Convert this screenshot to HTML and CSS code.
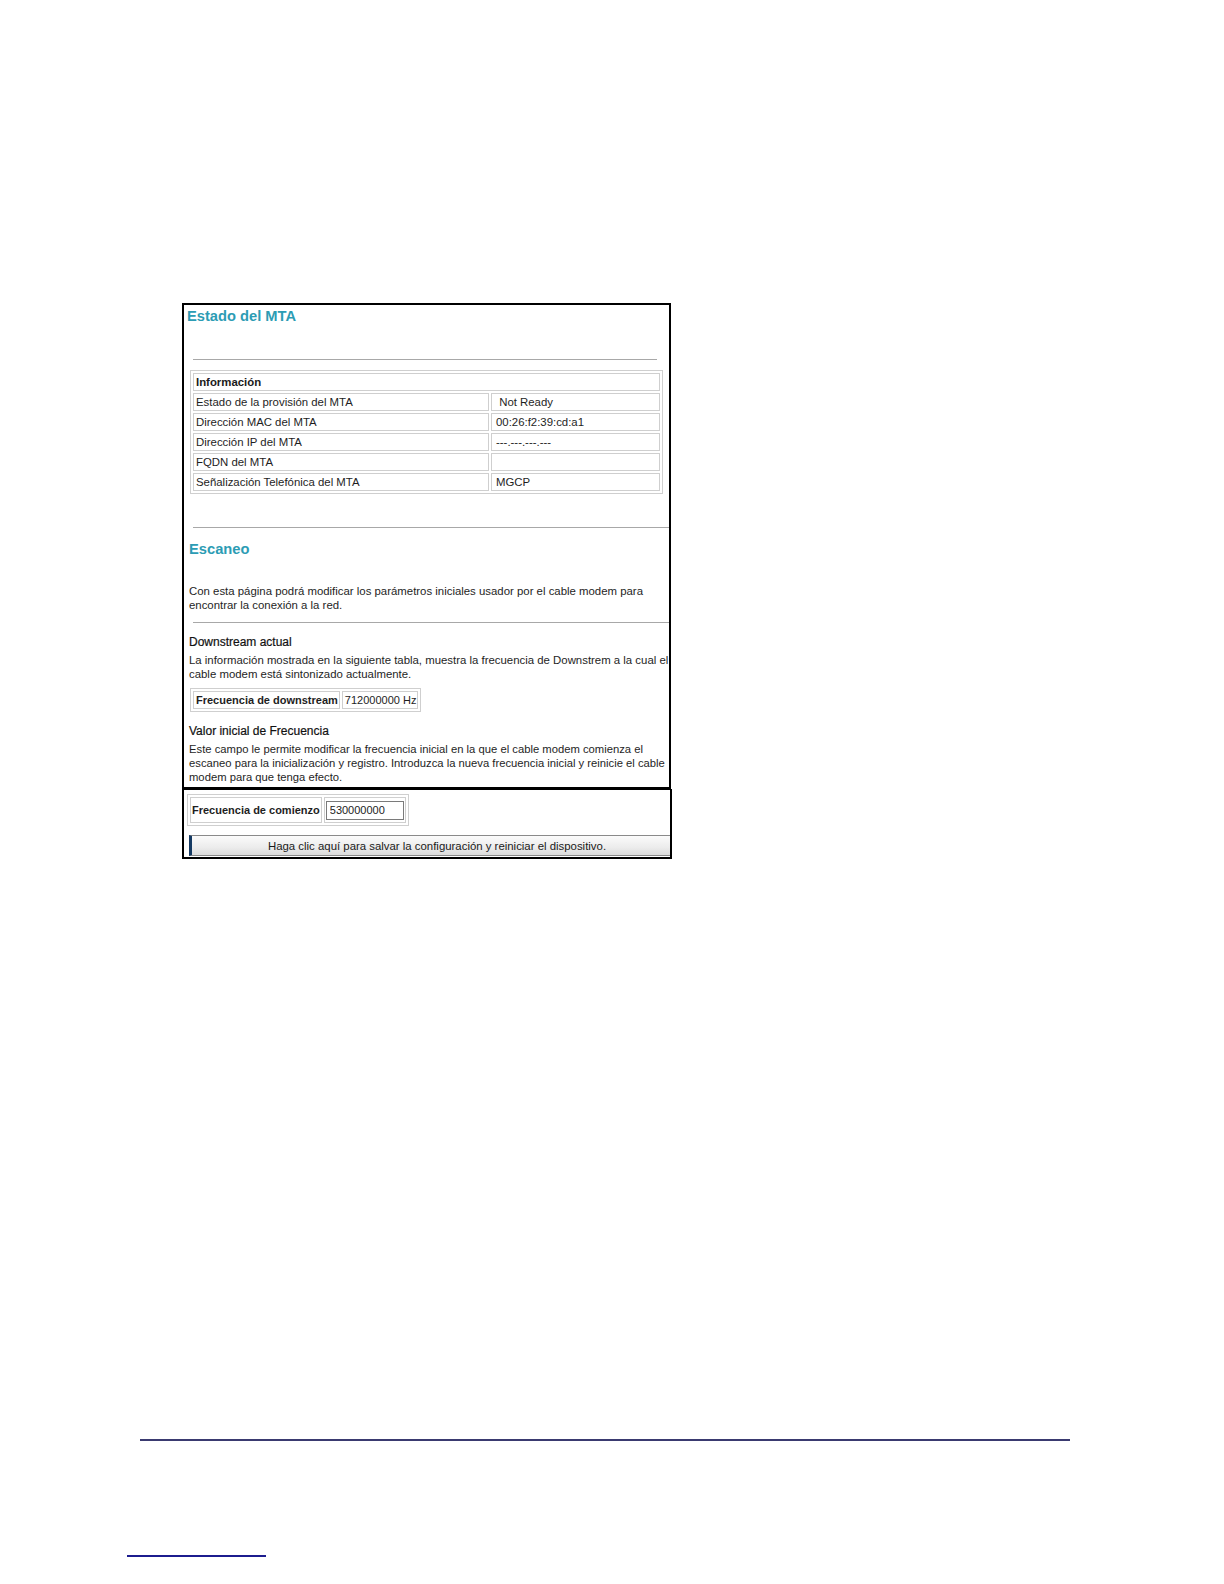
FILE: index.html
```html
<!DOCTYPE html>
<html lang="es">
<head>
<meta charset="utf-8">
<title>Estado del MTA</title>
<link rel="stylesheet" href="styles.css">
</head>
<body>
<div class="page">
  <div class="panel">
    <div class="box-top">
      <h1 class="title">Estado del MTA</h1>
      <hr class="rule rule-first">
      <table class="info">
        <tr><td class="head" colspan="2">Información</td></tr>
        <tr><td class="k">Estado de la provisión del MTA</td><td class="v">&nbsp;Not Ready</td></tr>
        <tr><td class="k">Dirección MAC del MTA</td><td class="v">00:26:f2:39:cd:a1</td></tr>
        <tr><td class="k">Dirección IP del MTA</td><td class="v">---.---.---.---</td></tr>
        <tr><td class="k">FQDN del MTA</td><td class="v"></td></tr>
        <tr><td class="k">Señalización Telefónica del MTA</td><td class="v">MGCP</td></tr>
      </table>
      <hr class="rule rule-wide rule-second">
      <h2 class="subtitle">Escaneo</h2>
      <p class="text intro">Con esta página podrá modificar los parámetros iniciales usador por el cable modem para encontrar la conexión a la red.</p>
      <hr class="rule rule-wide rule-third">
      <h3 class="label">Downstream actual</h3>
      <p class="text">La información mostrada en la siguiente tabla, muestra la frecuencia de Downstrem a la cual el cable modem está sintonizado actualmente.</p>
      <table class="freq">
        <tr><td class="fk">Frecuencia de downstream</td><td class="fv">712000000 Hz</td></tr>
      </table>
      <h3 class="label label-2">Valor inicial de Frecuencia</h3>
      <p class="text last">Este campo le permite modificar la frecuencia inicial en la que el cable modem comienza el escaneo para la inicialización y registro. Introduzca la nueva frecuencia inicial y reinicie el cable modem para que tenga efecto.</p>
    </div>
    <div class="box-bottom">
      <table class="start">
        <tr><td class="sk">Frecuencia de comienzo</td><td class="sv"><input class="field" type="text" value="530000000"></td></tr>
      </table>
      <button class="save" type="button">Haga clic aquí para salvar la configuración y reiniciar el dispositivo.</button>
    </div>
  </div>
  <div class="footer-rule"></div>
  <div class="footnote-rule"></div>
</div>
</body>
</html>
```

FILE: styles.css
```css
html, body {
  margin: 0;
  padding: 0;
  background: #ffffff;
}

.page {
  padding-top: 303px;
  font-family: "Liberation Sans", Arial, sans-serif;
  color: #1e1e1e;
}

.panel {
  margin-left: 182px;
  width: 491px;
}

.box-top {
  border: 2px solid #000;
  width: 485px;
  padding: 0 0 3px 0;
  overflow: hidden;
}

.title {
  margin: 0;
  padding: 2px 0 0 3px;
  font-size: 14.7px;
  line-height: 18px;
  font-weight: bold;
  color: #2c9cb4;
}

.rule {
  border: 0;
  height: 1px;
  background: #a8a8a8;
  margin: 0;
}

.rule-first {
  margin: 34px 12px 0 9px;
}

.info {
  border-collapse: separate;
  border-spacing: 2px;
  border: 1px solid #cfcfcf;
  margin: 10px 0 0 6px;
  width: 473px;
  font-size: 11.4px;
}

.info td {
  border: 1px solid #cfcfcf;
  height: 16px;
  padding: 0 2px;
  line-height: 16px;
  white-space: nowrap;
}

.info .head {
  font-weight: bold;
  color: #1a1a1a;
}

.info .k {
  width: 290px;
}

.info .v {
  padding-left: 4px;
}

.rule-wide {
  margin-right: 0;
  margin-left: 9px;
}

.rule-second {
  margin-top: 33px;
}

.subtitle {
  margin: 13px 0 0 5px;
  font-size: 14.7px;
  line-height: 17px;
  font-weight: bold;
  color: #2c9cb4;
}

.text {
  margin: 0 0 0 5px;
  font-size: 11.4px;
  line-height: 14px;
  white-space: normal;
  width: 488px;
}

.text.last {
  font-size: 11.25px;
}

.intro {
  margin-top: 26px;
}

.rule-third {
  margin-top: 10px;
}

.label {
  margin: 12px 0 3px 5px;
  font-size: 12px;
  line-height: 15px;
  font-weight: normal;
  color: #111;
  -webkit-text-stroke: 0.2px #111;
}

.label-2 {
  margin-top: 12px;
}

.freq {
  border-collapse: separate;
  border-spacing: 2px;
  border: 1px solid #cfcfcf;
  margin: 7px 0 0 6px;
  font-size: 11px;
}

.freq td {
  border: 1px solid #cfcfcf;
  height: 16px;
  line-height: 16px;
  padding: 0 1px 0 2px;
  white-space: nowrap;
}

.freq .fk {
  font-weight: bold;
}

.box-bottom {
  border: 2px solid #000;
  border-top-width: 1px;
  width: 486px;
  padding: 4px 0 1px 0;
}

.start {
  border-collapse: separate;
  border-spacing: 2px;
  border: 1px solid #cfcfcf;
  margin: 0 0 0 3px;
  font-size: 11px;
}

.start td {
  border: 1px solid #cfcfcf;
  height: 24px;
  padding: 0 1px;
  white-space: nowrap;
}

.start .sk {
  font-weight: bold;
}

.field {
  width: 70px;
  height: 17px;
  border: 1px solid #7a7a7a;
  padding: 0 3px;
  font-family: "Liberation Sans", Arial, sans-serif;
  font-size: 11px;
  color: #222;
  margin: 0;
}

.save {
  display: block;
  margin: 9px 0 0 5px;
  width: 481px;
  height: 21px;
  border: 1px solid #8a8a8a;
  border-left: 3px solid #153a63;
  border-right: 0;
  background: linear-gradient(#fbfbfb, #ececec 60%, #dcdcdc);
  font-family: "Liberation Sans", Arial, sans-serif;
  font-size: 11.4px;
  color: #1a1a1a;
  padding: 0 0 0 12px;
  text-align: center;
}

.footer-rule {
  margin: 580px 0 0 140px;
  width: 930px;
  height: 2px;
  background: #3a3a70;
}

.footnote-rule {
  margin: 114px 0 0 127px;
  width: 139px;
  height: 2px;
  background: #1c1c8e;
}
```
